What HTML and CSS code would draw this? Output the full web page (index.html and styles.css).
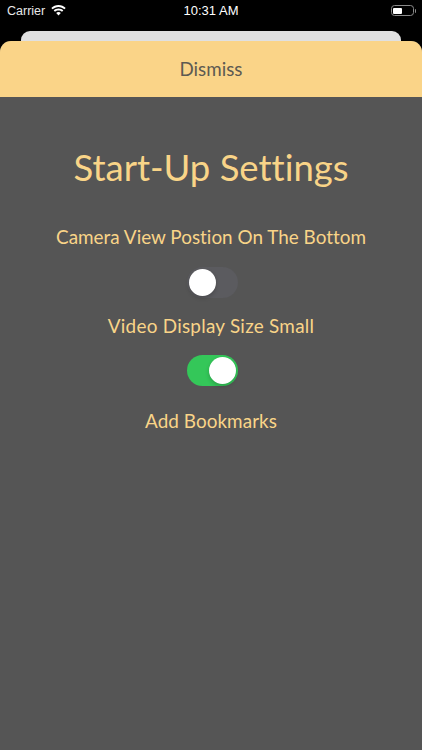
FILE: index.html
```html
<!DOCTYPE html>
<html lang="en">
<head>
<meta charset="utf-8">
<title>Start-Up Settings</title>
<link rel="stylesheet" href="styles.css">
</head>
<body>
<div class="screen">
  <header class="status">
    <div class="status-left">
      <span>Carrier</span>
      <svg class="wifi" width="15" height="11" viewBox="0 0 15 11"><path d="M7.500 0C4.700 0 2.200 1.100.3 2.900l1.300 1.400C3.100 2.800 5.200 1.900 7.500 1.900s4.400.9 5.900 2.400l1.300-1.400C12.800 1.100 10.300 0 7.500 0z" fill="#fff"/><path d="M7.500 3.500c-1.800 0-3.500.7-4.800 1.900L4 6.800c.9-.9 2.100-1.400 3.500-1.400s2.600.5 3.500 1.400l1.300-1.400C11 4.200 9.300 3.500 7.500 3.500z" fill="#fff"/><path d="M7.500 7c-.9 0-1.700.3-2.300.9L7.500 10.500l2.300-2.600C9.200 7.300 8.400 7 7.500 7z" fill="#fff"/></svg>
    </div>
    <div class="status-time">10:31 AM</div>
    <div class="status-right">
      <span class="battery"><span class="battery-fill"></span></span>
      <span class="battery-cap"></span>
    </div>
  </header>
  <div class="back-sheet"></div>
  <main class="sheet">
    <div class="dismiss">Dismiss</div>
    <section class="content">
      <h1 class="title">Start-Up Settings</h1>
      <p class="label">Camera View Postion On The Bottom</p>
      <div class="switch switch-off"><span class="knob"></span></div>
      <p class="label label-second">Video Display Size Small</p>
      <div class="switch switch-on"><span class="knob"></span></div>
      <p class="label label-third">Add Bookmarks</p>
    </section>
  </main>
</div>
</body>
</html>
```
FILE: styles.css
```css
* { box-sizing: border-box; }
html, body { margin: 0; padding: 0; }
body { background: #000; font-family: Lato, "Open Sans", sans-serif; font-variant-ligatures: none; }
.screen { width: 422px; height: 750px; display: flex; flex-direction: column; background: #000; overflow: hidden; }
.status { height: 31px; flex: none; display: grid; grid-template-columns: 1fr auto 1fr; align-items: center; padding: 0 6px 10px 7px; color: #fff; font-family: "Liberation Sans", sans-serif; font-size: 13px; }
.status-left { display: flex; align-items: center; gap: 6px; color: #e8e8e8; font-size: 12.500px; }
.wifi { margin-top: -1px; }
.status-time { font-size: 13px; margin-left: -1px; }
.status-right { display: flex; justify-content: flex-end; align-items: center; gap: 1px; }
.battery { width: 23px; height: 11px; border: 1px solid #8a8a8a; border-radius: 3.500px; padding: 1.500px; display: flex; }
.battery-fill { width: 9px; background: #fff; border-radius: 1px; }
.battery-cap { width: 1.500px; height: 4px; background: #8a8a8a; border-radius: 0 1px 1px 0; }
.back-sheet { height: 10px; flex: none; margin: 0 21px; background: #e0e0e0; border-radius: 9px 9px 0 0; }
.sheet { flex: 1; display: flex; flex-direction: column; background: #555; border-radius: 11px 11px 0 0; overflow: hidden; }
.dismiss { height: 56px; flex: none; display: flex; align-items: center; justify-content: center; padding-bottom: 2px; background: #fad488; color: #5d5a52; font-size: 18.800px; }
.content { display: flex; flex-direction: column; align-items: center; color: #f9d488; }
.title { margin: 47px 0 0; font-size: 36.500px; font-weight: 400; line-height: 46px; }
.label { margin: 35px 0 0; font-size: 18.900px; line-height: 24px; }
.label-second { margin-top: 16px; letter-spacing: .25px; }
.label-third { margin-top: 24px; letter-spacing: .05px; }
.switch { width: 51px; height: 31px; margin: 18px 0 0 2px; border-radius: 16px; padding: 2px; display: flex; }
.switch-off { background: #5b5b5f; }
.switch-on { background: #34c759; justify-content: flex-end; margin-top: 17px; }
.knob { width: 27px; height: 27px; border-radius: 50%; background: #fff; box-shadow: 0 2px 4px rgba(0,0,0,.2); }
.label-third { margin-top: 23px; }
```
